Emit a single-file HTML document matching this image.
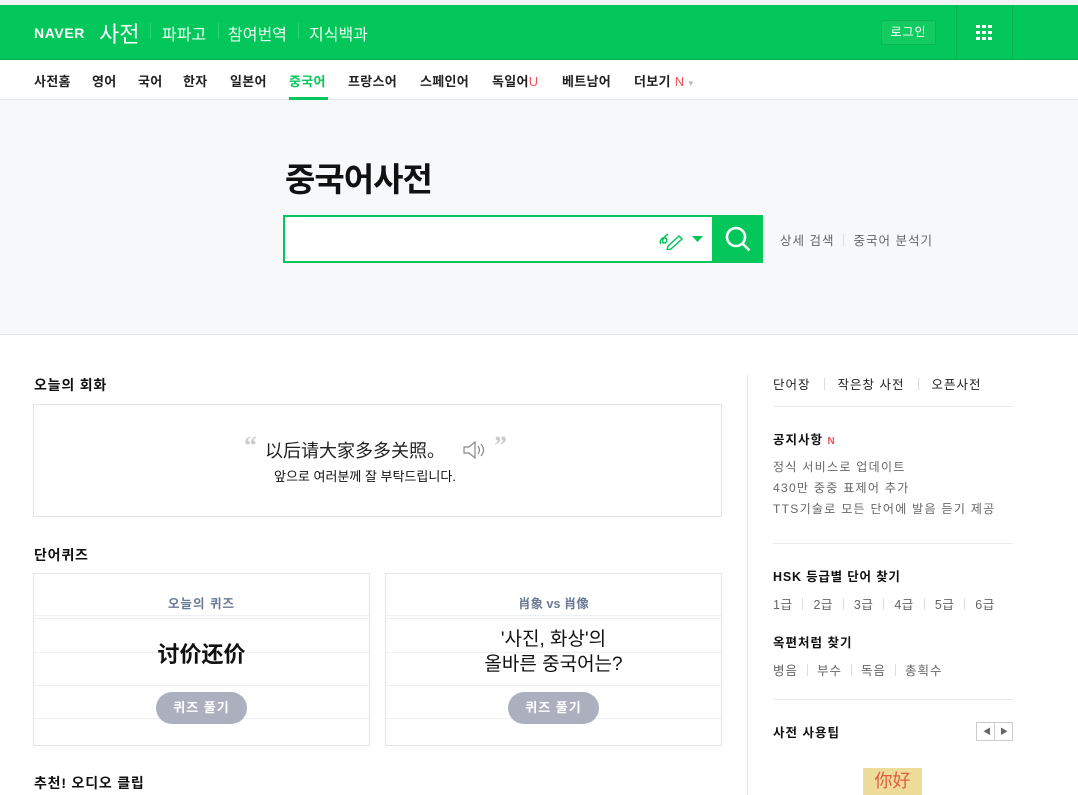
<!DOCTYPE html>
<html><head><meta charset="utf-8"><style>
*{margin:0;padding:0;box-sizing:border-box}
body{width:1078px;height:795px;overflow:hidden;background:#fff;font-family:"Liberation Sans","Noto Sans CJK KR",sans-serif;color:#222;position:relative}
.a{position:absolute;white-space:nowrap}
.top{position:absolute;left:0;top:0;width:1078px;height:5px;background:#f4f4f4}
.hdr{position:absolute;left:0;top:5px;width:1078px;height:55px;background:#03c75a;border-bottom:1px solid #02b350}
.nav{position:absolute;left:0;top:60px;width:1078px;height:40px;border-bottom:1px solid #e3e5e8;background:#fff}
.nav span{position:absolute;top:11px;font-size:13px;font-weight:bold;color:#222;letter-spacing:0.3px}
.srch{position:absolute;left:0;top:100px;width:1078px;height:235px;background:#f7f8fa;border-bottom:1px solid #e3e5e8}
.h3{font-size:14px;font-weight:bold;color:#111;letter-spacing:0.8px}
.box{position:absolute;border:1px solid #e3e5e8;background:#fff}
.line{position:absolute;left:0;right:0;height:1px;background:#eff0f5}
.btn{position:absolute;width:91px;height:32px;border-radius:16px;background:#acafbd;color:#fff;font-size:13px;font-weight:bold;text-align:center;line-height:32px;letter-spacing:1px}
.gr{color:#666;font-size:12px}
.sep{display:inline-block;width:1px;height:12px;background:#ddd;margin:0 9px;vertical-align:-1px}
.hr{position:absolute;left:773px;width:240px;height:1px;background:#ebebeb}
</style></head><body>
<div class="top"></div>
<div class="hdr">
<div class="a" style="left:34px;top:20px;color:#fff;font-weight:900;font-size:14px;letter-spacing:0.6px">NAVER</div>
<div class="a" style="left:99px;top:12px;color:#fff;font-size:22px">사전</div>
<div class="a" style="left:150px;top:18px;width:1px;height:16px;background:#2bd276"></div>
<div class="a" style="left:162px;top:16px;color:#eafff2;font-size:16px">파파고</div>
<div class="a" style="left:218px;top:18px;width:1px;height:16px;background:#2bd276"></div>
<div class="a" style="left:228px;top:16px;color:#eafff2;font-size:16px">참여번역</div>
<div class="a" style="left:298px;top:18px;width:1px;height:16px;background:#2bd276"></div>
<div class="a" style="left:309px;top:16px;color:#eafff2;font-size:16px">지식백과</div>
<div class="a" style="left:881px;top:15px;width:55px;height:25px;border:1px solid #0ab552;background:#14cb62;color:#fff;font-size:12px;text-align:center;line-height:23px;letter-spacing:1px">로그인</div>
<div class="a" style="left:956px;top:0;width:1px;height:54px;background:#05b352"></div>
<div class="a" style="left:1012px;top:0;width:1px;height:54px;background:#05b352"></div>
<svg class="a" style="left:976px;top:20px" width="17" height="15"><g fill="#fff"><rect x="0" y="0" width="4" height="3"/><rect x="6" y="0" width="4" height="3"/><rect x="12" y="0" width="4" height="3"/><rect x="0" y="6" width="4" height="3"/><rect x="6" y="6" width="4" height="3"/><rect x="12" y="6" width="4" height="3"/><rect x="0" y="12" width="4" height="3"/><rect x="6" y="12" width="4" height="3"/><rect x="12" y="12" width="4" height="3"/></g></svg>
</div>
<div class="nav">
<span style="left:34px">사전홈</span><span style="left:92px">영어</span><span style="left:138px">국어</span><span style="left:183px">한자</span><span style="left:230px">일본어</span>
<span style="left:289px;color:#03c75a">중국어</span>
<div class="a" style="left:289px;top:37px;width:39px;height:3px;background:#03c75a"></div>
<span style="left:348px">프랑스어</span><span style="left:420px">스페인어</span><span style="left:492px">독일어<b style="color:#f0525c;font-weight:normal">U</b></span><span style="left:562px">베트남어</span><span style="left:634px">더보기<b style="color:#f0525c;font-weight:normal"> N</b><i style="color:#bbb;font-style:normal;font-size:8px"> ▼</i></span>
</div>
<div class="srch">
<div class="a" style="left:285px;top:53px;font-size:33px;color:#111;letter-spacing:-1px;font-weight:bold;-webkit-text-stroke:0">중국어사전</div>
<div class="a" style="left:283px;top:115px;width:431px;height:48px;border:2px solid #03c75a;background:#fff"></div>
<svg class="a" style="left:658px;top:126px" width="28" height="24" viewBox="0 0 28 24" fill="none" stroke="#03c75a" stroke-width="1.5"><path d="M3 18c-2-3 1-7 4-6s2 5-1 5c-3 0 -1-6 4-9"/><path d="M10 20l11-10 3 3-11 10-4 1z"/></svg>
<svg class="a" style="left:692px;top:135px" width="12" height="8"><path d="M0 1h11L5.5 7z" fill="#03c75a"/></svg>
<div class="a" style="left:713px;top:115px;width:50px;height:48px;background:#03c75a"></div>
<svg class="a" style="left:724px;top:125px" width="28" height="28" fill="none" stroke="#fff" stroke-width="2.6"><circle cx="12" cy="12" r="9"/><path d="M18.5 18.5l7 7"/></svg>
<div class="a gr" style="left:780px;top:130px;font-size:12.5px;letter-spacing:1px">상세 검색<span class="sep"></span>중국어 분석기</div>
</div>
<div class="a h3" style="left:34px;top:375px">오늘의 회화</div>
<div class="box" style="left:33px;top:404px;width:689px;height:113px">
<div class="a" style="left:210px;top:26px;color:#ccc;font-size:26px;font-weight:bold;font-family:'Liberation Serif',serif">“</div>
<div class="a" style="left:231px;top:32px;font-size:18px;color:#222;font-family:'Liberation Sans','Noto Sans CJK SC',sans-serif">以后请大家多多关照。</div>
<svg class="a" style="left:428px;top:35px" width="24" height="20" fill="none" stroke="#888" stroke-width="1.2"><path d="M2 7h5l6-5v16l-6-5H2z"/><path d="M16 6q3 4 0 8M19 4q5 6 0 12"/></svg>
<div class="a" style="left:460px;top:26px;color:#ccc;font-size:26px;font-weight:bold;font-family:'Liberation Serif',serif">”</div>
<div class="a" style="left:240px;top:61px;font-size:13px;color:#111">앞으로 여러분께 잘 부탁드립니다.</div>
</div>
<div class="a h3" style="left:34px;top:545px">단어퀴즈</div>
<div class="box" style="left:33px;top:573px;width:337px;height:173px">
<div class="line" style="top:41px"></div><div class="line" style="top:44px"></div><div class="line" style="top:78px"></div><div class="line" style="top:111px"></div><div class="line" style="top:144px"></div>
<div class="a" style="left:0;width:335px;text-align:center;top:19px;font-size:12.5px;font-weight:bold;color:#6b7a93;letter-spacing:1px">오늘의 퀴즈</div>
<div class="a" style="left:0;width:335px;text-align:center;top:63px;font-size:22px;font-weight:bold;color:#111;font-family:'Liberation Sans','Noto Sans CJK SC',sans-serif">讨价还价</div>
<div class="btn" style="left:122px;top:118px">퀴즈 풀기</div>
</div>
<div class="box" style="left:385px;top:573px;width:337px;height:173px">
<div class="line" style="top:41px"></div><div class="line" style="top:44px"></div><div class="line" style="top:78px"></div><div class="line" style="top:111px"></div><div class="line" style="top:144px"></div>
<div class="a" style="left:0;width:335px;text-align:center;top:19px;font-size:12.5px;font-weight:bold;color:#6b7a93;font-family:'Liberation Sans','Noto Sans CJK SC',sans-serif">肖象 vs 肖像</div>
<div class="a" style="left:0;width:335px;text-align:center;top:53px;font-size:19px;line-height:25px;color:#111">'사진, 화상'의<br>올바른 중국어는?</div>
<div class="btn" style="left:122px;top:118px">퀴즈 풀기</div>
</div>
<div class="a h3" style="left:34px;top:773px">추천! 오디오 클립</div>
<div class="a" style="left:747px;top:375px;width:1px;height:420px;background:#e3e5e8"></div>
<div class="a" style="left:773px;top:374px;font-size:12.5px;color:#222;letter-spacing:1px">단어장<span class="sep" style="margin:0 13px"></span>작은창 사전<span class="sep" style="margin:0 13px"></span>오픈사전</div>
<div class="hr" style="top:406px"></div>
<div class="a" style="left:773px;top:429px;font-size:12.5px;font-weight:bold;color:#111;letter-spacing:1px">공지사항 <span style="color:#f0525c;font-size:10px">N</span></div>
<div class="a gr" style="left:773px;top:457px;line-height:21px;letter-spacing:1.3px">정식 서비스로 업데이트<br>430만 중중 표제어 추가<br>TTS기술로 모든 단어에 발음 듣기 제공</div>
<div class="hr" style="top:543px"></div>
<div class="a" style="left:773px;top:566px;font-size:12.5px;font-weight:bold;color:#111;letter-spacing:0.8px">HSK 등급별 단어 찾기</div>
<div class="a gr" style="left:773px;top:594px;font-size:12.5px;letter-spacing:0.5px">1급<span class="sep" style="margin:0 10px"></span>2급<span class="sep" style="margin:0 10px"></span>3급<span class="sep" style="margin:0 10px"></span>4급<span class="sep" style="margin:0 10px"></span>5급<span class="sep" style="margin:0 10px"></span>6급</div>
<div class="a" style="left:773px;top:632px;font-size:12.5px;font-weight:bold;color:#111;letter-spacing:1px">옥편처럼 찾기</div>
<div class="a gr" style="left:773px;top:660px;font-size:12.5px;letter-spacing:1px">병음<span class="sep"></span>부수<span class="sep"></span>독음<span class="sep"></span>총획수</div>
<div class="hr" style="top:699px"></div>
<div class="a" style="left:773px;top:722px;font-size:12.5px;font-weight:bold;color:#111;letter-spacing:1px">사전 사용팁</div>
<div class="a" style="left:976px;top:722px;width:37px;height:19px;border:1px solid #ccc;background:#fff"><div class="a" style="left:17px;top:0;width:1px;height:17px;background:#ccc"></div><div class="a" style="left:6px;top:3px;font-size:8px;color:#666">◀</div><div class="a" style="left:23px;top:3px;font-size:8px;color:#666">▶</div></div>
<div class="a" style="left:863px;top:768px;width:59px;height:27px;background:#eedc9a;color:#e05c42;font-size:18px;text-align:center;line-height:27px;font-family:'Liberation Sans','Noto Sans CJK SC',sans-serif">你好</div>
</body></html>
